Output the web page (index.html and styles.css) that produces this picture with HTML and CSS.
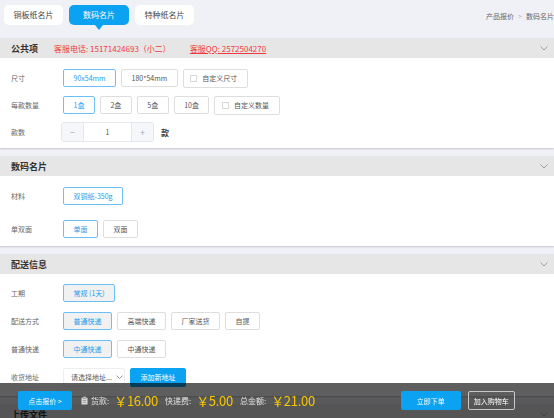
FILE: index.html
```html
<!DOCTYPE html>
<html lang="zh-CN">
<head>
<meta charset="utf-8">
<title>数码名片</title>
<link rel="stylesheet" href="styles.css">
</head>
<body>
<div class="topnav">
  <div class="tabs">
    <div class="tab">铜板纸名片</div>
    <div class="tab tab-active">数码名片</div>
    <div class="tab">特种纸名片</div>
  </div>
  <div class="crumb"><span>产品报价</span><span class="crumb-sep">&gt;</span><span>数码名片</span></div>
</div>

<section class="sec">
  <div class="sec-head">
    <span class="sec-title">公共项</span>
    <span class="contact contact-tel">客服电话: 15171424693（小二）</span>
    <span class="contact contact-qq">客服QQ: 2572504270</span>
    <svg class="chev" width="8" height="5" viewBox="0 0 8 5"><polyline points="0.5,0.5 4,4 7.5,0.5" fill="none" stroke="#9a9a9a" stroke-width="0.9"/></svg>
  </div>
  <div class="sec-body body-1">
    <div class="row">
      <div class="label">尺寸</div>
      <div class="opts">
        <span class="btn sel">90x54mm</span>
        <span class="btn">180*54mm</span>
        <span class="btn chk"><i class="box"></i>自定义尺寸</span>
      </div>
    </div>
    <div class="row">
      <div class="label">每款数量</div>
      <div class="opts">
        <span class="btn sel">1盒</span>
        <span class="btn">2盒</span>
        <span class="btn">5盒</span>
        <span class="btn">10盒</span>
        <span class="btn chk"><i class="box"></i>自定义数量</span>
      </div>
    </div>
    <div class="row">
      <div class="label">款数</div>
      <div class="stepper">
        <span class="step-btn">−</span>
        <span class="step-val">1</span>
        <span class="step-btn">+</span>
      </div>
      <span class="unit">款</span>
    </div>
  </div>
</section>

<section class="sec">
  <div class="sec-head">
    <span class="sec-title">数码名片</span>
    <svg class="chev" width="8" height="5" viewBox="0 0 8 5"><polyline points="0.5,0.5 4,4 7.5,0.5" fill="none" stroke="#9a9a9a" stroke-width="0.9"/></svg>
  </div>
  <div class="sec-body body-2">
    <div class="row">
      <div class="label">材料</div>
      <div class="opts"><span class="btn sel">双铜纸-350g</span></div>
    </div>
    <div class="row">
      <div class="label">单双面</div>
      <div class="opts">
        <span class="btn sel">单面</span>
        <span class="btn">双面</span>
      </div>
    </div>
  </div>
</section>

<section class="sec">
  <div class="sec-head">
    <span class="sec-title">配送信息</span>
    <svg class="chev" width="8" height="5" viewBox="0 0 8 5"><polyline points="0.5,0.5 4,4 7.5,0.5" fill="none" stroke="#9a9a9a" stroke-width="0.9"/></svg>
  </div>
  <div class="sec-body body-3">
    <div class="row">
      <div class="label">工期</div>
      <div class="opts"><span class="btn sel fill">常规 (1天)</span></div>
    </div>
    <div class="row">
      <div class="label">配送方式</div>
      <div class="opts">
        <span class="btn sel fill">普通快递</span>
        <span class="btn">高端快递</span>
        <span class="btn">厂家送货</span>
        <span class="btn">自提</span>
      </div>
    </div>
    <div class="row">
      <div class="label">普通快递</div>
      <div class="opts">
        <span class="btn sel fill">中通快递</span>
        <span class="btn">中通快递</span>
      </div>
    </div>
    <div class="row">
      <div class="label">收货地址</div>
      <div class="opts">
        <span class="select">请选择地址...<svg class="sel-chev" width="7" height="4" viewBox="0 0 7 4"><polyline points="0.5,0.5 3.5,3.5 6.5,0.5" fill="none" stroke="#888" stroke-width="0.8"/></svg></span>
        <span class="btn primary">添加新地址</span>
      </div>
    </div>
  </div>
</section>

<section class="sec">
  <div class="sec-head">
    <span class="sec-title">上传文件</span>
    <svg class="chev" width="8" height="5" viewBox="0 0 8 5"><polyline points="0.5,0.5 4,4 7.5,0.5" fill="none" stroke="#9a9a9a" stroke-width="0.9"/></svg>
  </div>
  <div class="sec-body body-4"></div>
</section>

<div class="bar">
  <span class="bar-btn quote">点击报价 &gt;</span>
  <svg class="clip" width="7" height="9" viewBox="0 0 7 9"><rect x="0.5" y="1.5" width="6" height="7" rx="0.6" fill="#d9d9d9"/><rect x="2" y="0.5" width="3" height="2" rx="0.4" fill="#d9d9d9" stroke="#5a5a5a" stroke-width="0.5"/><line x1="1.8" y1="4.5" x2="5.2" y2="4.5" stroke="#777" stroke-width="0.6"/><line x1="1.8" y1="6.3" x2="5.2" y2="6.3" stroke="#777" stroke-width="0.6"/></svg>
  <span class="bar-label">货款:</span><span class="price">￥16.00</span>
  <span class="bar-label">快递费:</span><span class="price">￥5.00</span>
  <span class="bar-label">总金额:</span><span class="price">￥21.00</span>
  <span class="bar-btn order">立即下单</span>
  <span class="bar-btn cart">加入购物车</span>
</div>
</body>
</html>
```

FILE: styles.css
```css
html, body {
  margin: 0;
  padding: 0;
}
body {
  background: #f0f1f6;
  font-family: "Noto Sans CJK SC", "Noto Sans", sans-serif;
  color: #555;
  overflow: hidden;
  font-size: 7px;
}

/* top nav */
.topnav {
  height: 38px;
  display: flex;
  align-items: flex-start;
}
.tabs {
  display: flex;
  gap: 6px;
  padding: 5px 0 0 4px;
}
.tab {
  position: relative;
  height: 20px;
  line-height: 20px;
  padding: 0 9.5px;
  background: #fff;
  border-radius: 5px;
  font-size: 8px;
  color: #444;
}
.tab-active {
  background: #0ba2f2;
  color: #fff;
  padding: 0 14px;
}
.tab-active::after {
  content: "";
  position: absolute;
  left: 50%;
  bottom: -5px;
  margin-left: -4px;
  border-top: 5px solid #0ba2f2;
  border-left: 4px solid transparent;
  border-right: 4px solid transparent;
}
.crumb {
  margin-left: auto;
  padding-top: 11px;
  font-size: 7px;
  color: #666;
  white-space: nowrap;
}
.crumb-sep {
  color: #bbb;
  margin: 0 4px;
}

/* sections */
.sec {
  background: #fff;
  margin-bottom: 8px;
  box-shadow: 0 1px 1.5px rgba(0, 0, 0, 0.18);
}
.sec-head {
  height: 20px;
  background: #e6e6e6;
  display: flex;
  align-items: center;
  padding: 0 6px 0 11px;
}
.sec-title {
  font-size: 9px;
  font-weight: bold;
  color: #333;
}
.contact {
  font-size: 8px;
  color: #f23a3d;
}
.contact-tel {
  margin-left: 16px;
}
.contact-qq {
  margin-left: 19px;
  text-decoration: underline;
}
.chev {
  margin-left: auto;
}

.sec-body {
  display: flex;
  flex-direction: column;
}
.body-1 {
  padding: 10px 0 6px;
  gap: 7px;
}
.body-2 {
  padding: 10px 0 7px;
  gap: 13px;
}
.body-3 {
  padding: 9px 0 9px;
  gap: 8px;
}
.body-4 {
  height: 30px;
}

.row {
  display: flex;
  align-items: center;
  height: 20px;
}
.label {
  width: 52px;
  padding-left: 11px;
  color: #666;
  font-size: 7px;
}
.opts {
  display: flex;
  align-items: center;
  gap: 5px;
}
.btn {
  display: inline-flex;
  align-items: center;
  height: 18px;
  box-sizing: border-box;
  padding: 0 9.5px;
  border: 1px solid #dedede;
  border-radius: 2px;
  background: #fff;
  color: #555;
  font-size: 7px;
  white-space: nowrap;
}
.btn.sel {
  border-color: #6cc0f5;
  color: #1d9cf0;
}
.btn.fill {
  background: #f1f1f1;
}
.btn.primary {
  background: #0ba2f2;
  border-color: #0ba2f2;
  color: #fff;
  height: 19px;
}
.btn.chk {
  padding: 0 10px 0 6.5px;
  height: 19px;
}
.box {
  display: inline-block;
  width: 5px;
  height: 5px;
  border: 1px solid #d8d8d8;
  margin-right: 5px;
}

.stepper {
  display: flex;
  height: 20px;
  box-sizing: border-box;
  border: 1px solid #e4e7ed;
  border-radius: 3px;
  margin-left: -2px;
  overflow: hidden;
}
.step-btn {
  width: 21px;
  background: #f5f7fa;
  color: #aaa;
  display: flex;
  align-items: center;
  justify-content: center;
  font-size: 9px;
}
.step-val {
  width: 47px;
  border-left: 1px solid #e4e7ed;
  border-right: 1px solid #e4e7ed;
  display: flex;
  align-items: center;
  justify-content: center;
  color: #555;
}
.unit {
  margin-left: 7px;
  font-size: 8px;
  font-weight: bold;
  color: #333;
}

.select {
  display: inline-flex;
  align-items: center;
  width: 62px;
  height: 19px;
  box-sizing: border-box;
  padding: 0 0 0 7px;
  border: 1px solid #eee;
  border-radius: 2px;
  color: #555;
  font-size: 7px;
}
.sel-chev {
  margin-left: 4px;
}

/* bottom bar */
.bar {
  position: fixed;
  left: 0;
  right: 0;
  bottom: 0;
  height: 35px;
  background: rgba(0, 0, 0, 0.63);
  display: flex;
  align-items: center;
  padding-left: 18px;
  color: #ddd;
}
.bar-btn {
  height: 19px;
  display: inline-flex;
  align-items: center;
  justify-content: center;
  box-sizing: border-box;
  border-radius: 2px;
  font-size: 7px;
  color: #fff;
}
.quote {
  width: 54px;
  background: #0ba2f2;
}
.clip {
  margin-left: 9px;
  margin-right: 3px;
}
.bar-label {
  font-size: 8px;
  color: #e0e0e0;
  margin-right: 5px;
}
.price {
  font-size: 13px;
  color: #f6c700;
  margin-right: 7px;
  letter-spacing: -0.3px;
}
.order {
  width: 60px;
  background: #0ba2f2;
  margin-left: 79px;
}
.cart {
  width: 47px;
  margin-left: 7px;
  border: 1px solid #c8c8c8;
}
```
